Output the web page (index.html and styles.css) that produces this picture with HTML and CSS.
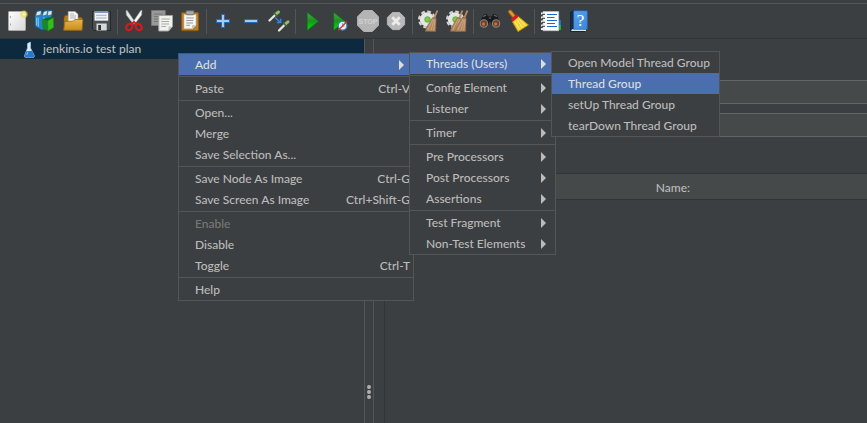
FILE: index.html
```html
<!DOCTYPE html>
<html lang="en">
<head>
<meta charset="utf-8">
<title>jenkins.io test plan</title>
<link rel="stylesheet" href="styles.css">
</head>
<body>
<svg class="defs" aria-hidden="true">
  <defs>
    <linearGradient id="paper" x1="0" y1="0" x2="1" y2="1"><stop offset="0" stop-color="#fdfdfd"/><stop offset="1" stop-color="#d8d8d8"/></linearGradient>
    <linearGradient id="green" x1="0" y1="0" x2="0" y2="1"><stop offset="0" stop-color="#3fae3f"/><stop offset=".48" stop-color="#1f8f22"/><stop offset=".55" stop-color="#08a80c"/><stop offset="1" stop-color="#12d812"/></linearGradient>
    <linearGradient id="gold" x1="0" y1="0" x2="0" y2="1"><stop offset="0" stop-color="#e9b54a"/><stop offset="1" stop-color="#c98d1c"/></linearGradient>
    <linearGradient id="blue" x1="0" y1="0" x2="1" y2="1"><stop offset="0" stop-color="#5ba3ee"/><stop offset="1" stop-color="#3d86d8"/></linearGradient>
    <radialGradient id="glow"><stop offset="0" stop-color="#fffde0"/><stop offset=".45" stop-color="#f3e36a"/><stop offset="1" stop-color="#e8d44a" stop-opacity="0"/></radialGradient>
    <g id="gear">
      <circle cx="9" cy="10.5" r="8" fill="none" stroke="#d4d5d3" stroke-width="2" stroke-dasharray="3.8 2.48"/>
      <circle cx="9" cy="10.5" r="5.2" fill="#dfe2dc" stroke="#e4e4e2" stroke-width="4"/>
      <circle cx="9.5" cy="10.5" r="2.8" fill="#7cc94a" stroke="#459023" stroke-width=".6"/>
    </g>
    <g id="besom">
      <path d="M20.4 1.5 17.3 9.2" stroke="#b98d64" stroke-width="1.8"/>
      <path d="M15.5 8.6 19.2 9.3 18.6 22.5 8.3 22.3 9.8 18Z" fill="#b08660" stroke="#8a6340" stroke-width=".6"/>
      <path d="M16 10 10.8 21M17 10.5 14 21.5M18 10.5 16.7 21.5" stroke="#d5b18c" stroke-width=".7"/>
    </g>
  </defs>
</svg>

<header class="toolbar" role="toolbar">
  <button class="tool" aria-label="New"><svg viewBox="0 0 24 24"><rect x="3.5" y="2.5" width="17" height="19" rx=".8" fill="url(#paper)" stroke="#a8a8a8"/><path d="M5.5 7v2M5.5 14.5v2" stroke="#aaa"/><circle cx="19" cy="5.3" r="4.5" fill="url(#glow)"/></svg></button>
  <button class="tool" aria-label="Templates"><svg viewBox="0 0 24 24"><path d="M2 6 4 2 8.5 1.5 9.5 5 11 2 14.5 1.3 19.5 1.5 19 6 15 19 9 21 2.3 17.5Z" fill="#2584c8" stroke="#135a91" stroke-width=".7"/><path d="M4 3 8 2 7.4 5.5 3.3 6.4ZM10.8 3 14 2 13.4 5.5 10 6.5ZM15.3 2.5 18.7 2 18.3 5.5 15 6.2Z" fill="#e9e5d8"/><path d="M3.5 8.5v8M5.3 8.5v9M11 8.5v4" stroke="#7cc5ef" stroke-width="1.2"/><path d="M9 10.5 14.5 11.8 15 22 9.4 19.3Z" fill="#19882a"/><path d="M14.5 11.5 20.5 8.5 20.7 18.5 15 22Z" fill="#35bd19" stroke="#17830e" stroke-width=".6"/><path d="M9 10.5 15.3 8.2 20.4 8.5 14.5 11.7Z" fill="#0c6e1d"/></svg></button>
  <button class="tool" aria-label="Open"><svg viewBox="0 0 24 24"><path d="M3 9 4 6.5 9 6.2 11 8.5H21V20H3Z" fill="#b57d17" stroke="#82580f" stroke-width=".6"/><path d="M7.2 2.5H14L17 5.3V15H7.2Z" fill="#f5f5f2" stroke="#aaa" stroke-width=".6"/><path d="M9 5h4M9 7h6M9 9h6" stroke="#aaa" stroke-width=".9"/><path d="M4 12.5 12 12.2 14 10.5H21.8L21 21.3H2.7Z" fill="url(#gold)" stroke="#9b6c16" stroke-width=".8"/></svg></button>
  <button class="tool" aria-label="Save"><svg viewBox="0 0 24 24"><path d="M3.5 2.5H21.5V21.5H5.2L3.5 20Z" fill="#4c5052" stroke="#25282a"/><path d="M5.5 2.5h13.7v9.2H5.5Z" fill="#f0f3f5"/><path d="M5.5 2h13.7v1.9H5.5Z" fill="#7194b7"/><path d="M7 6.3h10.5M7 9h10.5" stroke="#9dafbd"/><path d="M7.5 14.5h10.2v7H7.5Z" fill="#d7d9d9"/><path d="M9.2 16h2.8v5H9.2Z" fill="#303437"/></svg></button>
  <span class="rule"></span>
  <button class="tool" aria-label="Cut"><svg viewBox="0 0 24 24"><path d="M4 1.5 5 1.3 13.2 13.2 11.4 15.2 4.4 6Z" fill="#e9e9e9" stroke="#999" stroke-width=".6"/><path d="M20 1.5 19 1.3 10.8 13.2 12.6 15.2 19.6 6Z" fill="#fafafa" stroke="#999" stroke-width=".6"/><ellipse cx="7.3" cy="18" rx="3.4" ry="2.8" transform="rotate(-42 7.3 18)" fill="none" stroke="#d7191c" stroke-width="2.1"/><ellipse cx="16.7" cy="18" rx="3.4" ry="2.8" transform="rotate(42 16.7 18)" fill="none" stroke="#d7191c" stroke-width="2.1"/><path d="M9.2 15.3 12 13 14.8 15.3" fill="none" stroke="#d7191c" stroke-width="2"/></svg></button>
  <button class="tool" aria-label="Copy"><svg viewBox="0 0 24 24"><path d="M1.5 1.5h13.7v15H1.5Z" fill="#989998" stroke="#777"/><path d="M4 5h9M4 7.5h5M4 10h5M4 12.5h4" stroke="#777"/><path d="M8.8 6.5h13.7v11L18.5 22H8.8Z" fill="#f1f1ef" stroke="#a4a4a2"/><path d="M11.3 10h8.7M11.3 12.5H19M11.3 15h7.7M11.3 17.5H16" stroke="#aaa"/><path d="M18.5 21.7v-4.2h3.7Z" fill="#c3c3c0"/></svg></button>
  <button class="tool" aria-label="Paste"><svg viewBox="0 0 24 24"><rect x="3.5" y="3.5" width="17" height="18.2" rx="1.3" fill="#bd7c20" stroke="#8c5710"/><path d="M6 5.5h12v10.8L14.5 19.7H6Z" fill="#f5f5f3" stroke="#c1c1bd" stroke-width=".6"/><rect x="8" y="1.8" width="8" height="4" rx="1" fill="#a9aaa8" stroke="#666" stroke-width=".8"/><path d="M8.3 9h7.5M8.3 11.5h7M8.3 14H15M8.3 16.3H12" stroke="#999"/><path d="M14.2 19.5v-3.3H18Z" fill="#bbb"/></svg></button>
  <span class="rule"></span>
  <button class="tool" aria-label="Expand all"><svg viewBox="0 0 24 24"><path d="M10.5 5.5h3v5h5v3h-5v5h-3v-5h-5v-3h5Z" fill="#a9caed" stroke="#2868b7" stroke-linejoin="round"/></svg></button>
  <button class="tool" aria-label="Collapse all"><svg viewBox="0 0 24 24"><rect x="5.5" y="10.5" width="13" height="3" rx=".5" fill="#a9caed" stroke="#2868b7"/></svg></button>
  <button class="tool" aria-label="Toggle"><svg viewBox="0 0 24 24"><g stroke-linecap="round"><path d="M2.5 11.5 7.6 6.5M12 21.5 17 16.5" stroke="#e7e7df" stroke-width="2.3"/><path d="M8.8 5.2 11.5 3M18.2 15.2 21 12.8" stroke="#8cbf6e" stroke-width="3"/><path d="M7.2 4 10 7M16.5 14 19.3 17" stroke="#4c663e" stroke-width="1.3"/></g><path d="M8 8.5 13 13M13.7 9.8V13.6H9.8" fill="none" stroke="#2d83e9" stroke-width="1.5"/></svg></button>
  <span class="rule"></span>
  <button class="tool" aria-label="Start"><svg viewBox="0 0 24 24"><path d="M7.3 3.6 18.5 12.3 7.3 21.2Z" fill="url(#green)" stroke="#07780b" stroke-width=".6"/></svg></button>
  <button class="tool" aria-label="Start no pauses"><svg viewBox="0 0 24 24"><path d="M5.8 3.6 17 12.3 5.8 21.2Z" fill="url(#green)" stroke="#07780b" stroke-width=".6"/><circle cx="14.6" cy="16.8" r="4.3" fill="#e8f2fa" stroke="#3e86c2" stroke-width="1.2"/><path d="M14.6 14v3h2" fill="none" stroke="#4d8abc" stroke-width=".8"/><path d="M10.3 21.2 19 12.5" stroke="#e12e29" stroke-width="1.3"/></svg></button>
  <button class="tool" aria-label="Stop"><svg viewBox="0 0 24 24"><path d="M7.7 1.5h8.6l6.2 6.2v8.6l-6.2 6.2H7.7L1.5 16.3V7.7Z" fill="#b5b5b5" stroke="#b0b0b0"/><text class="stop-text" x="12" y="15" text-anchor="middle">STOP</text></svg></button>
  <button class="tool" aria-label="Shutdown"><svg viewBox="0 0 24 24"><path d="M8.4 3.5h7.2l5 5v7.1l-5 5H8.4l-5-5V8.5Z" fill="#b9b9b9" stroke="#b4b4b4"/><path d="M8.3 8.3 15.7 15.7M15.7 8.3 8.3 15.7" stroke="#ececec" stroke-width="2.8"/></svg></button>
  <span class="rule"></span>
  <button class="tool" aria-label="Clear"><svg viewBox="0 0 24 24"><use href="#gear" x="1"/><use href="#besom"/></svg></button>
  <button class="tool" aria-label="Clear all"><svg viewBox="0 0 24 24"><use href="#gear" x="1"/><use href="#besom" x="-3"/><use href="#besom" x="2"/></svg></button>
  <span class="rule"></span>
  <button class="tool" aria-label="Search"><svg viewBox="0 0 24 24"><path d="M1.5 15 4.8 6.5 8 4.7 10.5 7.5H13.5L16 4.7 19.2 6.5 22.5 15 19 18.5 14 16 12 12 10 16 5 18.5Z" fill="#191a1b"/><path d="M5 7.5 8 6.3M16 6.3 19 7.5M10.8 9h2.4" stroke="#6b6d6e" stroke-width="1.2"/><circle cx="5.9" cy="14.5" r="3.7" fill="#69412c" stroke="#888" stroke-width="1.1"/><circle cx="18.1" cy="14.5" r="3.7" fill="#69412c" stroke="#888" stroke-width="1.1"/><circle cx="5.5" cy="15" r="1.7" fill="#c06d3d"/><circle cx="17.7" cy="15" r="1.7" fill="#c06d3d"/></svg></button>
  <button class="tool" aria-label="Reset search"><svg viewBox="0 0 24 24"><path d="M4.2 2.8 8.7 8.3" stroke="#995b18" stroke-width="4.5" stroke-linecap="round"/><path d="M4.2 2.8 8.7 8.3" stroke="#d89b3b" stroke-width="2.5" stroke-linecap="round"/><path d="M6.3 12.8 12.5 7.5 22.5 16 12 22.7Z" fill="#f0d231" stroke="#aa8610" stroke-width=".8"/><path d="M9 13 13.5 20M11 11 16.5 18.5M13 9.8 19.5 17" stroke="#fff08a" stroke-width="1"/><path d="M5.8 11.2 11.5 6.3" stroke="#d61b20" stroke-width="3.2"/></svg></button>
  <span class="rule"></span>
  <button class="tool" aria-label="Function helper"><svg viewBox="0 0 24 24"><path d="M19 11h3v5h-3Z" fill="#1870dc"/><path d="M19 16h3v5h-3Z" fill="#16b72a"/><path d="M4 2.5h15.7v19.2H4Z" fill="#fdfdfd" stroke="#c5c5c5" stroke-width=".6"/><path d="M8 5.5h10M8 8.5h7.5M8 11.5h10M8 14.5h8M8 17.5h10" stroke="#1d6ad0" stroke-width="1"/><path d="M2 4.5h4M2 8.5h4M2 12.5h4M2 16.5h4M2 20h4" stroke="#efefef" stroke-width="2"/><path d="M3 5.3h3M3 9.3h3M3 13.3h3M3 17.3h3" stroke="#222" stroke-width=".9"/></svg></button>
  <button class="tool" aria-label="Help"><svg viewBox="0 0 24 24"><path d="M3.5 3 6.5 1.7H20V20L17.5 22.5H3.5Z" fill="#142e49" stroke="#0c2136" stroke-width=".7"/><path d="M5 20.3H19V22H4Z" fill="#dce5eb"/><path d="M6.8 1.8H20.3V20.2H6.8Z" fill="url(#blue)" stroke="#2e70bf" stroke-width=".7"/><text class="book-mark" x="13.5" y="17" text-anchor="middle">?</text></svg></button>
</header>

<main class="workspace">
  <nav class="tree" aria-label="Test plan">
    <a class="node" href="#plan"><svg class="flask" viewBox="0 0 14 20"><path d="M5.5 4.5 8.5 3V9L12.3 16.7Q12.5 18.5 11 18.5H4Q2.3 18.5 2.5 16.7L5.5 9Z" fill="#dcecf8" stroke="#a9c3d6" stroke-width=".7"/><path d="M4.5 12h5.7l2 4.8Q12.3 18.3 11 18.5H4Q2.5 18.3 2.6 16.8Z" fill="#2678d3"/><path d="M6 12.5 4.7 16" stroke="#8bc2f4"/></svg>jenkins.io test plan</a>
  </nav>
  <div class="splitter"><i></i><i></i><i></i></div>
  <section class="editor" id="plan">
    <input class="field" type="text" aria-label="Name">
    <input class="field" type="text" aria-label="Comments">
    <table class="variables"><thead><tr><th>Name:</th></tr></thead><tbody><tr><td></td></tr></tbody></table>
  </section>
</main>

<div class="menu context" role="menu">
  <button class="item active" role="menuitem">Add<span class="arrow"></span></button>
  <hr>
  <button class="item" role="menuitem">Paste<kbd>Ctrl-V</kbd></button>
  <hr>
  <button class="item" role="menuitem">Open...</button>
  <button class="item" role="menuitem">Merge</button>
  <button class="item" role="menuitem">Save Selection As...</button>
  <hr>
  <button class="item" role="menuitem">Save Node As Image<kbd>Ctrl-G</kbd></button>
  <button class="item" role="menuitem">Save Screen As Image<kbd>Ctrl+Shift-G</kbd></button>
  <hr>
  <button class="item" role="menuitem" disabled>Enable</button>
  <button class="item" role="menuitem">Disable</button>
  <button class="item" role="menuitem">Toggle<kbd>Ctrl-T</kbd></button>
  <hr>
  <button class="item" role="menuitem">Help</button>

  <div class="menu add" role="menu">
    <button class="item active" role="menuitem">Threads (Users)<span class="arrow"></span></button>
    <hr>
    <button class="item" role="menuitem">Config Element<span class="arrow"></span></button>
    <button class="item" role="menuitem">Listener<span class="arrow"></span></button>
    <hr>
    <button class="item" role="menuitem">Timer<span class="arrow"></span></button>
    <hr>
    <button class="item" role="menuitem">Pre Processors<span class="arrow"></span></button>
    <button class="item" role="menuitem">Post Processors<span class="arrow"></span></button>
    <button class="item" role="menuitem">Assertions<span class="arrow"></span></button>
    <hr>
    <button class="item" role="menuitem">Test Fragment<span class="arrow"></span></button>
    <button class="item" role="menuitem">Non-Test Elements<span class="arrow"></span></button>

    <div class="menu threads" role="menu">
      <button class="item" role="menuitem">Open Model Thread Group</button>
      <button class="item active" role="menuitem">Thread Group</button>
      <button class="item" role="menuitem">setUp Thread Group</button>
      <button class="item" role="menuitem">tearDown Thread Group</button>
    </div>
  </div>
</div>
</body>
</html>
```
FILE: styles.css
```css
* { box-sizing: border-box; }

html, body { height: 100%; }

body {
  margin: 0;
  padding-top: 3px;
  display: flex;
  flex-direction: column;
  overflow: hidden;
  background: #3c3f41;
  color: #bbb;
  font: 500 12px/20px Lato, "Noto Sans", sans-serif;
}

button, input { font: inherit; color: inherit; }

.defs { position: absolute; width: 0; height: 0; }

.toolbar {
  display: flex;
  align-items: center;
  height: 36px;
  padding-left: 3px;
  border-top: 1px solid #555;
  border-bottom: 1px solid #323537;
  flex: none;
}

.tool {
  display: flex;
  justify-content: center;
  width: 28px;
  padding: 0;
  border: 0;
  background: none;
  flex: none;
}

.tool svg { width: 24px; height: 24px; }

.rule {
  width: 5px;
  height: 25px;
  flex: none;
  background: linear-gradient(#555, #555) center / 1px 100% no-repeat;
}

.stop-text { font: bold 7px "Liberation Sans", sans-serif; fill: #d2d2d2; }
.book-mark { font: 17px "Liberation Serif", serif; fill: #fff; }

.workspace { display: flex; flex: 1; min-height: 0; }

.tree { width: 365px; border-right: 1px solid #555; flex: none; }

.node {
  display: flex;
  align-items: center;
  gap: 7px;
  height: 20px;
  padding-left: 22px;
  line-height: 22px;
  background: #0d293e;
  color: #bbb;
  text-decoration: none;
}

.flask { width: 14px; height: 20px; }

.splitter {
  display: flex;
  flex-direction: column;
  align-items: center;
  justify-content: flex-end;
  gap: 1px;
  width: 9px;
  padding-bottom: 24px;
  border-right: 1px solid #555;
  flex: none;
}

.splitter i { width: 4px; height: 4px; border-radius: 2px; background: #b0b0b0; }

.editor {
  display: flex;
  flex-direction: column;
  flex: 1;
  padding: 41px 0 0 10px;
}

.field {
  height: 24px;
  margin: 0 0 9px 80px;
  padding: 0 6px;
  border: 1px solid #646464;
  border-right: 0;
  background: #45494a;
}

.variables {
  flex: 1;
  display: flex;
  flex-direction: column;
  margin-top: 27px;
  border-left: 1px solid #323537;
}

.variables thead, .variables tr, .variables th { display: block; }

.variables th {
  height: 27px;
  padding: 2px 0 0 94px;
  border: solid #323537;
  border-width: 1px 0;
  background: #45494a;
  font-weight: 500;
  line-height: 24px;
}

.menu {
  position: absolute;
  border: 1px solid #555;
  background: #3c3f41;
}

.context { left: 178px; top: 53px; width: 236px; }
.add { left: 230px; top: -2px; width: 147px; }
.threads { left: 141px; top: -2px; width: 169px; }

.menu hr {
  height: 1px;
  margin: 1px 0;
  border: 0;
  background: #555;
}

.item {
  display: flex;
  align-items: center;
  justify-content: space-between;
  width: 100%;
  height: 21px;
  padding: 1px 3px 0 16px;
  border: 0;
  background: none;
  line-height: 20px;
  white-space: nowrap;
}

.item:disabled { color: #777; }
.active { background: #4b6eaf; color: #ddd; }

kbd { font: inherit; }

.arrow {
  margin-right: 6px;
  border: solid transparent;
  border-width: 5px 0 5px 5px;
  border-left-color: currentColor;
}
```
